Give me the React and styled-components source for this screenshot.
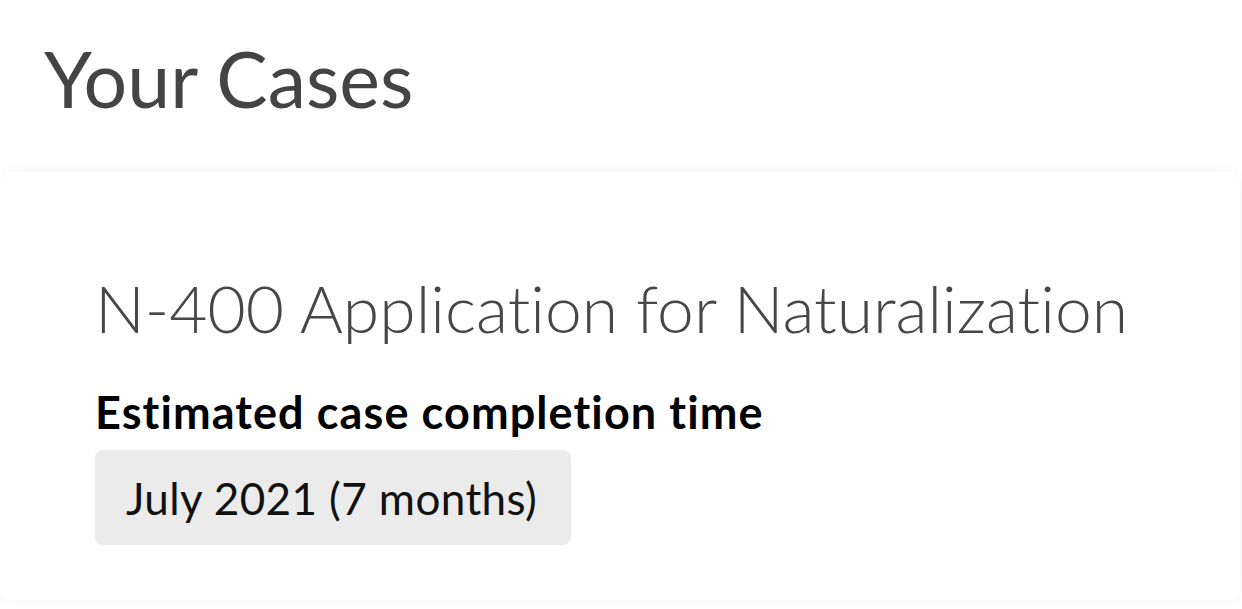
import React from "react";
import styled, { createGlobalStyle } from "styled-components";

const GlobalStyle = createGlobalStyle`
    html, body {
        margin: 0;
        padding: 0;
        background: #ffffff;
        font-family: Lato, "Open Sans", sans-serif;
        font-variant-ligatures: none;
    }
`;

const Page = styled.div`
    width: 1242px;
    height: 609px;
    overflow: hidden;
    box-sizing: border-box;
`;

const PageTitle = styled.h1`
    margin: 0;
    padding: 33px 0 0 44px;
    font-size: 77px;
    line-height: 90px;
    font-weight: 400;
    color: #444444;
`;

const Card = styled.section`
    margin: 49px 2px 0 0;
    height: 428px;
    box-sizing: border-box;
    padding: 96px 40px 0 95px;
    background: #ffffff;
    border-radius: 12px;
    box-shadow: 0 0 12px rgba(0, 0, 0, 0.06);
`;

const CaseTitle = styled.h2`
    margin: 0;
    font-size: 66px;
    line-height: 80px;
    font-weight: 300;
    color: #474747;
`;

const Label = styled.h3`
    margin: 36px 0 0;
    font-size: 45px;
    line-height: 56px;
    font-weight: 700;
    letter-spacing: 1.1px;
    color: #000000;
`;

const Estimate = styled.div`
    display: inline-flex;
    align-items: center;
    margin-top: 10px;
    height: 95px;
    box-sizing: border-box;
    padding: 0 34px 0 31px;
    background: #ebebeb;
    border-radius: 8px;
    font-size: 44px;
    letter-spacing: 0.4px;
    color: #111111;
`;

export default function App() {
    return (
        <Page>
            <GlobalStyle />
            <PageTitle>Your Cases</PageTitle>
            <Card>
                <CaseTitle>N-400 Application for Naturalization</CaseTitle>
                <Label>Estimated case completion time</Label>
                <Estimate>July 2021 (7 months)</Estimate>
            </Card>
        </Page>
    );
}
